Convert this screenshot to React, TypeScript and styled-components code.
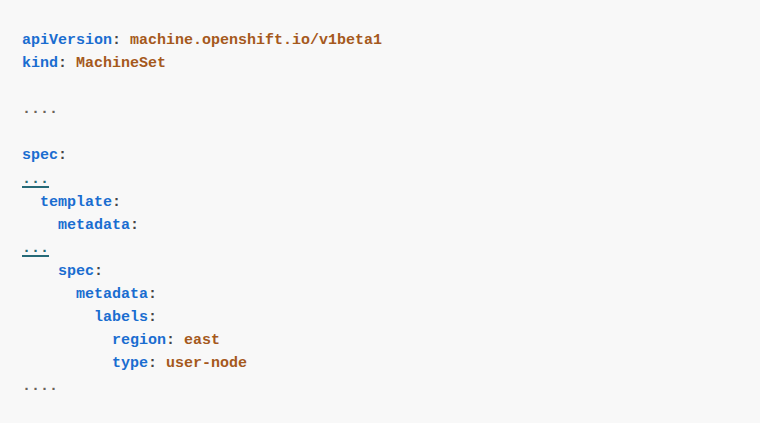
import React from "react";
import styled, { createGlobalStyle } from "styled-components";

const Global = createGlobalStyle`
  html, body { margin: 0; padding: 0; background: #f8f8f8; }
`;

const Block = styled.pre`
  margin: 0;
  padding: 29px 22px;
  background: #f8f8f8;
  font-family: "Liberation Mono", "DejaVu Sans Mono", monospace;
  font-weight: bold;
  font-size: 15px;
  line-height: 23.1px;
  color: #333;
  min-height: 423px;
  box-sizing: border-box;
`;

const Key = styled.span`
  color: #1a6dd0;
`;

const Val = styled.span`
  color: #a5591c;
`;

const Punct = styled.span`
  color: #444;
`;

const Ellipsis = styled.span`
  color: #6b6258;
`;

const Fold = styled.a`
  color: #266a77;
  text-decoration: underline;
  text-decoration-thickness: 2px;
  text-underline-offset: 3px;
`;

type Line =
  | { kind: "kv"; indent: number; k: string; v?: string }
  | { kind: "blank" }
  | { kind: "dots4" }
  | { kind: "fold" };

const lines: Line[] = [
  { kind: "kv", indent: 0, k: "apiVersion", v: "machine.openshift.io/v1beta1" },
  { kind: "kv", indent: 0, k: "kind", v: "MachineSet" },
  { kind: "blank" },
  { kind: "dots4" },
  { kind: "blank" },
  { kind: "kv", indent: 0, k: "spec" },
  { kind: "fold" },
  { kind: "kv", indent: 2, k: "template" },
  { kind: "kv", indent: 4, k: "metadata" },
  { kind: "fold" },
  { kind: "kv", indent: 4, k: "spec" },
  { kind: "kv", indent: 6, k: "metadata" },
  { kind: "kv", indent: 8, k: "labels" },
  { kind: "kv", indent: 10, k: "region", v: "east" },
  { kind: "kv", indent: 10, k: "type", v: "user-node" },
  { kind: "dots4" },
];

function renderLine(l: Line, i: number) {
  switch (l.kind) {
    case "blank":
      return <React.Fragment key={i}>{"\n"}</React.Fragment>;
    case "dots4":
      return (
        <React.Fragment key={i}>
          <Ellipsis>....</Ellipsis>
          {"\n"}
        </React.Fragment>
      );
    case "fold":
      return (
        <React.Fragment key={i}>
          <Fold>...</Fold>
          {"\n"}
        </React.Fragment>
      );
    default:
      return (
        <React.Fragment key={i}>
          {" ".repeat(l.indent)}
          <Key>{l.k}</Key>
          <Punct>:</Punct>
          {l.v ? (
            <>
              {" "}
              <Val>{l.v}</Val>
            </>
          ) : null}
          {"\n"}
        </React.Fragment>
      );
  }
}

export default function App() {
  return (
    <>
      <Global />
      <Block>{lines.map(renderLine)}</Block>
    </>
  );
}
